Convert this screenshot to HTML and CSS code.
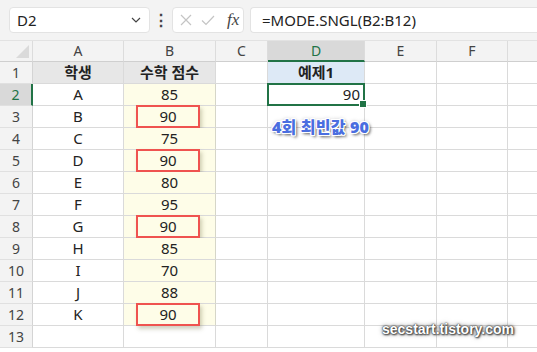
FILE: index.html
```html
<!DOCTYPE html>
<html lang="ko">
<head>
    <meta charset="UTF-8">
    <title>MODE.SNGL</title>
    <link rel="stylesheet" href="styles.css">
</head>
<body>

    <!-- Formula bar -->
    <div class="formula-bar">
        <div class="name-box">
            <span>D2</span>
            <svg class="chevron" width="10" height="6" viewBox="0 0 10 6"><path d="M1 1l4 4 4-4" fill="none" stroke="#444" stroke-width="1.2"/></svg>
        </div>
        <div class="dots">⋮</div>
        <div class="fx-box">
            <svg width="14" height="14" viewBox="0 0 14 14"><path d="M2 2l10 10M12 2L2 12" stroke="#c4c4c4" stroke-width="1.2"/></svg>
            <svg width="14" height="14" viewBox="0 0 14 14"><path d="M1 7.5l4 4L13 3" fill="none" stroke="#c4c4c4" stroke-width="1.2"/></svg>
            <span class="fx">fx</span>
        </div>
        <div class="formula">=MODE.SNGL(B2:B12)</div>
    </div>

    <!-- Sheet -->
    <div class="sheet">
        <div class="corner"><span class="tri"></span></div>
        <div class="col-head">A</div>
        <div class="col-head">B</div>
        <div class="col-head">C</div>
        <div class="col-head sel">D</div>
        <div class="col-head">E</div>
        <div class="col-head">F</div>
        <div class="col-head last"></div>
    </div>

    <div class="overlay-note">4회 최빈값 90</div>
    <div class="watermark">secstart.tistory.com</div>

    <script>
        const rows = [
            ["A", 85], ["B", 90], ["C", 75], ["D", 90], ["E", 80], ["F", 95],
            ["G", 90], ["H", 85], ["I", 70], ["J", 88], ["K", 90]
        ];
        const sheet = document.querySelector('.sheet');

        function cell(cls, text) {
            const d = document.createElement('div');
            d.className = cls;
            if (text !== undefined) d.textContent = text;
            sheet.appendChild(d);
            return d;
        }

        // Row 1 headers
        cell('row-head', '1');
        cell('cell th', '학생');
        cell('cell th', '수학 점수');
        cell('cell');
        cell('cell th blue', '예제1');
        cell('cell'); cell('cell'); cell('cell last');

        rows.forEach((r, i) => {
            const n = i + 2;
            cell(n === 2 ? 'row-head sel' : 'row-head', n);
            cell('cell center', r[0]);
            const b = cell('cell center score');
            if (r[1] === 90) {
                const m = document.createElement('span');
                m.className = 'mark';
                m.textContent = r[1];
                b.appendChild(m);
            } else {
                b.textContent = r[1];
            }
            cell('cell');
            if (n === 2) {
                const d = cell('cell active', '90');
                const h = document.createElement('span');
                h.className = 'handle';
                d.appendChild(h);
            } else {
                cell('cell');
            }
            cell('cell'); cell('cell'); cell('cell last');
        });

        // Row 13
        cell('row-head', '13');
        for (let i = 0; i < 6; i++) cell('cell');
        cell('cell last');
    </script>
</body>
</html>
```

FILE: styles.css
```css
/* General */
body, html {
    margin: 0;
    padding: 0;
    overflow: hidden;
    width: 537px;
    height: 352px;
    background: #ffffff;
    font-family: 'Noto Sans', 'Noto Sans CJK KR', sans-serif;
    color: #222;
    position: relative;
}

/* Formula bar */
.formula-bar {
    height: 41px;
    box-sizing: border-box;
    background: #f3f3f3;
    border-bottom: 1px solid #e2e2e2;
    display: flex;
    align-items: center;
    padding: 0 0 1px 9px;
}
.name-box {
    width: 141px;
    height: 26px;
    box-sizing: border-box;
    background: #fff;
    border: 1px solid #e3e3e3;
    border-radius: 4px;
    display: flex;
    align-items: center;
    justify-content: space-between;
    padding: 0 8px 0 7px;
    font-size: 15px;
    color: #222;
}
.dots {
    width: 22px;
    text-align: center;
    font-size: 16px;
    font-weight: bold;
    color: #444;
}
.fx-box {
    width: 72px;
    height: 26px;
    box-sizing: border-box;
    background: #fff;
    border: 1px solid #e3e3e3;
    border-radius: 4px;
    display: flex;
    align-items: center;
    gap: 8px;
    padding: 0 0 0 6px;
}
.fx {
    font-family: 'Liberation Serif', serif;
    font-style: italic;
    font-size: 17px;
    color: #444;
    margin-left: 4px;
}
.formula {
    flex: 1;
    height: 26px;
    margin-left: 6px;
    box-sizing: border-box;
    background: #fff;
    border: 1px solid #e3e3e3;
    border-right: none;
    border-radius: 4px 0 0 4px;
    padding: 0 0 0 11px;
    font-size: 15px;
    line-height: 24px;
    color: #222;
}

/* Sheet grid */
.sheet {
    display: grid;
    grid-template-columns: 33px 91px 92px 52px 97px 72px 71px 29px;
    grid-template-rows: 21px repeat(13, 22px);
}
.sheet > div {
    box-sizing: border-box;
    font-size: 15px;
}
.corner {
    background: #f3f3f3;
    border-right: 1px solid #dcdcdc;
    border-bottom: 1px solid #cfcfcf;
    position: relative;
}
.tri {
    position: absolute;
    right: 3px;
    bottom: 3px;
    width: 0;
    height: 0;
    border-left: 13px solid transparent;
    border-bottom: 13px solid #dadada;
}
.col-head {
    background: #f3f3f3;
    border-right: 1px solid #dcdcdc;
    border-bottom: 1px solid #cfcfcf;
    text-align: center;
    line-height: 20px;
    color: #444;
    font-size: 14px !important;
}
.col-head.sel {
    background: #d9d9d9;
    border-bottom: 2px solid #217346;
    color: #217346;
}
.col-head.last {
    border-right: none;
}
.row-head {
    background: #f3f3f3;
    border-right: 1px solid #d4d4d4;
    border-bottom: 1px solid #e0e0e0;
    text-align: center;
    line-height: 21px;
    color: #444;
    font-size: 14px !important;
}
.row-head.sel {
    background: #d9d9d9;
    border-right: 2px solid #217346;
    color: #217346;
}
.cell {
    border-right: 1px solid #dadada;
    border-bottom: 1px solid #dadada;
    line-height: 21px;
}
.cell.last {
    border-right: none;
}
.center {
    text-align: center;
}
.th {
    background: #e7e7e7;
    font-weight: bold;
    text-align: center;
}
.th.blue {
    background: #dde9f6;
}
.score {
    background: #fefde8;
    border-right-color: #d6d6c8;
}
.mark {
    display: inline-block;
    width: 60px;
    height: 19px;
    line-height: 19px;
    margin: -1px 0 0 -3px;
    border: 2px solid #ef5350;
    vertical-align: top;
    box-shadow: 2px 3px 4px rgba(120, 120, 80, 0.35);
}
.active {
    border: 2px solid #217346;
    text-align: right;
    padding-right: 3px;
    line-height: 18px;
    position: relative;
    margin: -1px 0 0 -1px;
    width: calc(100% + 1px);
}
.handle {
    position: absolute;
    right: -4px;
    bottom: -4px;
    width: 6px;
    height: 6px;
    background: #217346;
    border: 1px solid #fff;
}

/* Annotations */
.overlay-note {
    position: absolute;
    left: 272px;
    top: 114px;
    font-size: 16px;
    font-weight: 900;
    color: #4a6ee0;
    text-shadow: 1px 0 0 #fff, -1px 0 0 #fff, 0 1px 0 #fff, 0 -1px 0 #fff,
                 1px 1px 0 #fff, -1px -1px 0 #fff, 1px -1px 0 #fff, -1px 1px 0 #fff,
                 2px 2px 3px rgba(0, 0, 0, 0.6), 0 0 4px rgba(0, 0, 0, 0.35);
    letter-spacing: 0.2px;
}
.watermark {
    position: absolute;
    left: 382px;
    top: 321px;
    font-family: 'Liberation Sans', sans-serif;
    font-size: 14px;
    font-weight: bold;
    color: #ffffff;
    text-shadow: 0 0 1px #333, 0 0 2px #444, 1px 1px 2px #333, 0 0 5px rgba(0, 0, 0, 0.6);
}
```
